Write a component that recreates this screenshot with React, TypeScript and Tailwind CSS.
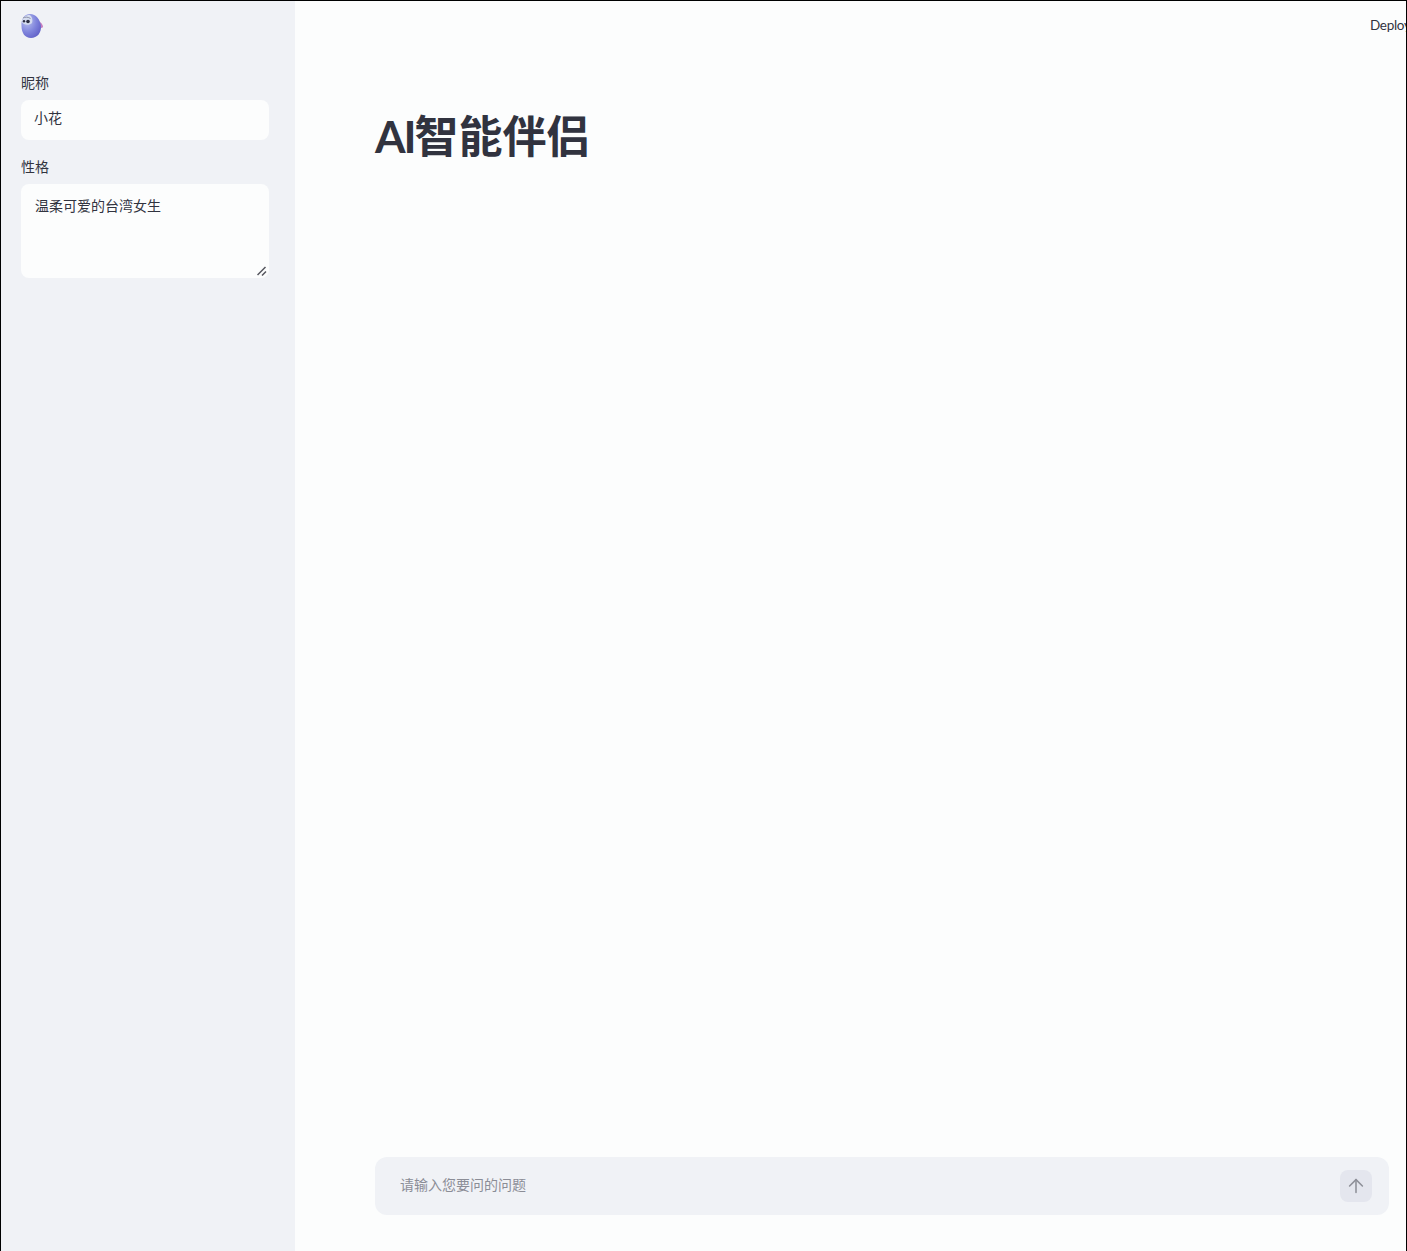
import React from 'react';
import { ArrowUp } from 'lucide-react';

const cjk = 'font-["Lato","Noto_Sans_CJK_SC",sans-serif]';

function BirdLogo() {
  return (
    <svg width="24" height="26" viewBox="1 0 24 26" className="block">
      <defs>
        <radialGradient id="birdBody" cx="0.3" cy="0.3" r="0.85">
          <stop offset="0" stopColor="#b9c1ee" />
          <stop offset="0.55" stopColor="#7f84dc" />
          <stop offset="1" stopColor="#5d5cc4" />
        </radialGradient>
      </defs>
      <path d="M18 8 C21 9 23 12 23 13.500 C23 15.500 20 15 18 14 Z" fill="#c77fc0" />
      <path d="M10 1 C16 1 20 6 21 13 C21.500 20 17 25 11 25 C5 25 1.500 20 1.500 13 C1 6 4 1 10 1 Z" fill="url(#birdBody)" />
      <path d="M2 9 C2 4 6 2 9.500 2 C12 3 13 7 12 10 C10 12.500 3 12.500 2 9 Z" fill="#d5dcef" />
      <circle cx="8" cy="8.500" r="1.800" fill="#2b2d42" />
      <circle cx="4" cy="8.300" r="1.200" fill="#2b2d42" />
      <path d="M3 5 C5 3.800 8 3.800 10.500 5.500" fill="none" stroke="#6a6f86" strokeWidth="0.700" />
    </svg>
  );
}

export default function App() {
  return (
    <div className={`flex h-[1251px] w-[1407px] overflow-hidden border-t border-l border-r border-black bg-[#fcfdfd] text-sm text-[#31333f] ${cjk}`}>
      <aside className="flex w-[294px] shrink-0 flex-col bg-[#f0f2f6] pl-5 pr-[26px] pt-[12px]">
        <BirdLogo />
        <label className="mt-[34px] block leading-5">昵称</label>
        <input
          defaultValue="小花"
          className={`mt-[7px] h-10 w-full rounded-lg bg-[#fcfdfd] px-[13px] pb-[6px] text-sm text-[#31333f] outline-none ${cjk}`}
        />
        <label className="mt-[17px] block leading-5">性格</label>
        <div className="relative mt-[7px] h-[94px]">
          <textarea
            defaultValue="温柔可爱的台湾女生"
            className={`block h-full w-full resize-none rounded-lg bg-[#fcfdfd] px-[14px] pb-[11px] pt-3 text-sm leading-5 text-[#31333f] outline-none ${cjk}`}
          />
          <svg width="10" height="10" viewBox="0 0 10 10" className="absolute bottom-[2px] right-[2px]">
            <path d="M0.500 9 L8.500 1 M5 9.500 L9 5.500" stroke="#55565e" strokeWidth="1.500" fill="none" />
          </svg>
        </div>
      </aside>

      <main className="flex min-w-0 flex-1 flex-col">
        <div className="flex justify-end overflow-hidden pt-[14px]">
          <div className="w-9 shrink-0 overflow-hidden whitespace-nowrap text-[13.5px] leading-5 tracking-[-0.3px]">Deploy</div>
        </div>
        <div className="flex flex-1 flex-col pl-[80px] pr-[17px]">
          <h1 className="mt-[71px] text-[44px] font-bold leading-[60px]">
            <span className="tracking-[-2px]">AI</span>智能伴侣
          </h1>
          <div className="mb-9 mt-auto flex h-[58px] items-center rounded-xl bg-[#f0f2f6] pl-[25px] pr-[17px]">
            <input
              placeholder="请输入您要问的问题"
              className={`min-w-0 flex-1 bg-transparent pb-[3px] text-sm outline-none placeholder:text-[#8b8d96] ${cjk}`}
            />
            <button className="flex h-8 w-8 items-center justify-center rounded-lg bg-[#e4e6ee]">
              <ArrowUp size={22} strokeWidth={1.7} color="#8e9099" />
            </button>
          </div>
        </div>
      </main>
    </div>
  );
}
